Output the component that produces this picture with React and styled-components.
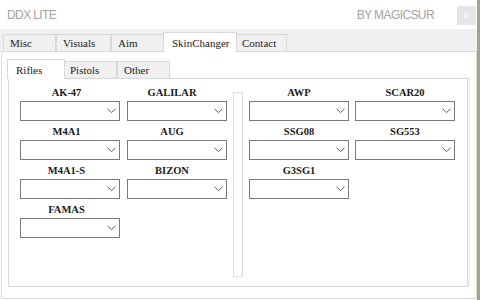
import styled, { createGlobalStyle } from "styled-components";

const GlobalStyle = createGlobalStyle`
  html, body {
    margin: 0;
    padding: 0;
    background: #aaa18d;
  }
  #root {
    width: 480px;
    height: 300px;
    overflow: hidden;
  }
`;

const Window = styled.div`
  width: 477px;
  height: 300px;
  background: #ffffff;
  display: flex;
  flex-direction: column;
  box-sizing: border-box;
`;

const TitleBar = styled.div`
  height: 29px;
  display: flex;
  align-items: center;
  padding-left: 7px;
  font-family: "Liberation Sans", Arial, sans-serif;
  font-size: 12px;
  letter-spacing: -0.6px;
  color: #a3a3a3;
`;

const Title = styled.span`
  flex: 1;
`;

const Author = styled.span`
  margin-right: 23px;
`;

const CloseButton = styled.button`
  width: 19px;
  height: 19px;
  margin: 2px 1px 0 0;
  padding: 0;
  border: none;
  background: #e6e6e6;
  display: flex;
  align-items: center;
  justify-content: center;
`;

const TabStrip = styled.div`
  display: flex;
  align-items: flex-end;
  height: ${(p) => p.$height}px;
  padding-left: ${(p) => p.$pad}px;
  background: ${(p) => p.$bg};
  box-sizing: border-box;
`;

const Tab = styled.div`
  position: relative;
  box-sizing: border-box;
  width: ${(p) => p.$width}px;
  height: ${(p) => (p.$active ? 20 : 17)}px;
  margin: ${(p) => (p.$active ? "0 -2px -1px -2px" : "0")};
  z-index: ${(p) => (p.$active ? 2 : 1)};
  padding-left: ${(p) => (p.$active ? 8 : 6)}px;
  display: flex;
  align-items: center;
  border: 1px solid #d9d9d9;
  border-bottom: none;
  background: ${(p) => (p.$active ? "#ffffff" : "#f0f0f0")};
  font-family: "Liberation Serif", "Times New Roman", serif;
  font-size: 11px;
  color: #1b1b1b;
  white-space: nowrap;
`;

const OuterPage = styled.div`
  flex: 1;
  margin: 0 0 1px 1px;
  border: 1px solid #d9d9d9;
  padding: 7px 8px 11px 6px;
  display: flex;
  flex-direction: column;
`;

const InnerPage = styled.div`
  flex: 1;
  border: 1px solid #d9d9d9;
  box-shadow: 2px 0 0 #f0f0f0;
  padding: 6px 0 0 11px;
  display: flex;
  align-items: flex-start;
`;

const Grid = styled.div`
  display: grid;
  grid-template-columns: 100px 100px;
  column-gap: ${(p) => p.$gap}px;
  row-gap: 3px;
`;

const Field = styled.div`
  display: flex;
  flex-direction: column;
`;

const Label = styled.div`
  height: 15px;
  line-height: 16px;
  margin-bottom: 1px;
  padding-right: ${(p) => p.$shift}px;
  text-align: center;
  font-family: "Liberation Serif", "Times New Roman", serif;
  font-weight: bold;
  font-size: 10.5px;
  color: #1b1b1b;
`;

const Combo = styled.div`
  box-sizing: border-box;
  height: 20px;
  border: 1px solid #7a7a7a;
  background: #ffffff;
  display: flex;
  align-items: center;
  justify-content: flex-end;
  padding-right: 3px;
`;

const Separator = styled.div`
  box-sizing: border-box;
  width: 10px;
  height: 185px;
  margin: 7px 6px 0 6px;
  border: 1px solid #dcdcdc;
  background: #ffffff;
`;

function Chevron() {
  return (
    <svg width="9" height="6" viewBox="0 0 9 6">
      <polyline
        points="0.5,0.8 4.5,4.6 8.5,0.8"
        fill="none"
        stroke="#5a5a5a"
        strokeWidth="1"
      />
    </svg>
  );
}

function WeaponField({ name, shift }) {
  return (
    <Field>
      <Label $shift={shift}>{name}</Label>
      <Combo>
        <Chevron />
      </Combo>
    </Field>
  );
}

const mainTabs = [
  { name: "Misc", width: 53 },
  { name: "Visuals", width: 55 },
  { name: "Aim", width: 54 },
  { name: "SkinChanger", width: 74, active: true },
  { name: "Contact", width: 52 },
];

const subTabs = [
  { name: "Rifles", width: 58, active: true },
  { name: "Pistols", width: 54 },
  { name: "Other", width: 53 },
];

const leftWeapons = ["AK-47", "GALILAR", "M4A1", "AUG", "M4A1-S", "BIZON", "FAMAS"];
const rightWeapons = ["AWP", "SCAR20", "SSG08", "SG553", "G3SG1"];

export default function App() {
  return (
    <>
      <GlobalStyle />
      <Window>
        <TitleBar>
          <Title>DDX LITE</Title>
          <Author>BY MAGICSUR</Author>
          <CloseButton>
            <svg width="7" height="7" viewBox="0 0 7 7">
              <path d="M1 1L6 6M6 1L1 6" stroke="#f8f8f8" strokeWidth="1.4" />
            </svg>
          </CloseButton>
        </TitleBar>
        <TabStrip $height={22} $pad={3} $bg="#f0f0f0">
          {mainTabs.map((t) => (
            <Tab key={t.name} $width={t.width} $active={t.active}>
              {t.name}
            </Tab>
          ))}
        </TabStrip>
        <OuterPage>
          <TabStrip $height={19} $pad={1} $bg="#ffffff">
            {subTabs.map((t) => (
              <Tab key={t.name} $width={t.width} $active={t.active}>
                {t.name}
              </Tab>
            ))}
          </TabStrip>
          <InnerPage>
            <Grid $gap={7}>
              {leftWeapons.map((w, i) => (
                <WeaponField key={w} name={w} shift={i % 2 ? 10 : 7} />
              ))}
            </Grid>
            <Separator />
            <Grid $gap={6}>
              {rightWeapons.map((w) => (
                <WeaponField key={w} name={w} shift={0} />
              ))}
            </Grid>
          </InnerPage>
        </OuterPage>
      </Window>
    </>
  );
}
